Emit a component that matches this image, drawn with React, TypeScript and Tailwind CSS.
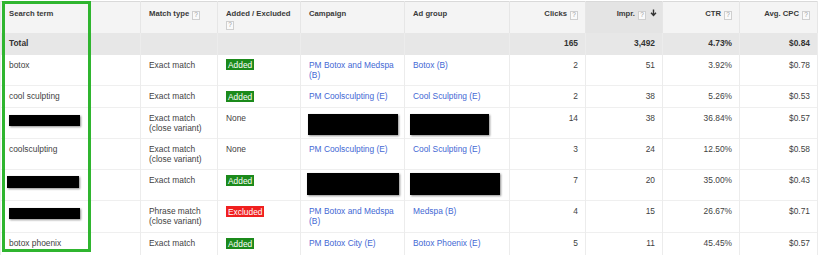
import type { ReactNode } from 'react';

type Row = {
  term: ReactNode;
  match: ReactNode;
  status: 'Added' | 'Excluded' | 'None';
  campaign: ReactNode;
  adGroup: ReactNode;
  clicks: string;
  impr: string;
  ctr: string;
  cpc: string;
  height: string;
};

const colWidths = ['w-[140px]', 'w-[77px]', 'w-[83px]', 'w-[104px]', 'w-[105px]', 'w-[76px]', 'w-[77px]', 'w-[77px]', 'w-[78px]'];

function Help() {
  return (
    <span className="ml-[3px] inline-flex h-[9px] w-[8px] items-center justify-center border border-[#cfcfcf] bg-[#fafafa] align-[-1px] text-[6.5px] font-normal leading-none text-[#9a9a9a]">
      ?
    </span>
  );
}

function Redacted({ className }: { className: string }) {
  return <div className={`bg-black shadow-[1px_1px_2px_rgba(0,0,0,0.45)] ${className}`} />;
}

function Link({ children }: { children: ReactNode }) {
  return <span className="text-[#4368d4]">{children}</span>;
}

function Status({ value }: { value: Row['status'] }) {
  if (value === 'None') return <span>None</span>;
  const color = value === 'Added' ? 'bg-[#1b8a1b]' : 'bg-[#f0201f]';
  return <span className={`${color} px-[2px] py-[0.5px] text-white`}>{value}</span>;
}

const rows: Row[] = [
  {
    term: 'botox',
    match: 'Exact match',
    status: 'Added',
    campaign: <Link>PM Botox and Medspa<br />(B)</Link>,
    adGroup: <Link>Botox (B)</Link>,
    clicks: '2', impr: '51', ctr: '3.92%', cpc: '$0.78',
    height: 'h-[31px]',
  },
  {
    term: 'cool sculpting',
    match: 'Exact match',
    status: 'Added',
    campaign: <Link>PM Coolsculpting (E)</Link>,
    adGroup: <Link>Cool Sculpting (E)</Link>,
    clicks: '2', impr: '38', ctr: '5.26%', cpc: '$0.53',
    height: 'h-[22px]',
  },
  {
    term: <Redacted className="mt-[2px] h-[11px] w-[71px]" />,
    match: <>Exact match<br />(close variant)</>,
    status: 'None',
    campaign: <Redacted className="-ml-[1px] mt-[1px] h-[21px] w-[90px]" />,
    adGroup: <Redacted className="-ml-[3px] mt-[1px] h-[21px] w-[79px]" />,
    clicks: '14', impr: '38', ctr: '36.84%', cpc: '$0.57',
    height: 'h-[31px]',
  },
  {
    term: 'coolsculpting',
    match: <>Exact match<br />(close variant)</>,
    status: 'None',
    campaign: <Link>PM Coolsculpting (E)</Link>,
    adGroup: <Link>Cool Sculpting (E)</Link>,
    clicks: '3', impr: '24', ctr: '12.50%', cpc: '$0.58',
    height: 'h-[31px]',
  },
  {
    term: <Redacted className="-ml-[2px] mt-[1px] h-[12px] w-[72px]" />,
    match: 'Exact match',
    status: 'Added',
    campaign: <Redacted className="-ml-[2px] -mt-[2px] h-[22px] w-[92px]" />,
    adGroup: <Redacted className="-ml-[3px] -mt-[2px] h-[22px] w-[90px]" />,
    clicks: '7', impr: '20', ctr: '35.00%', cpc: '$0.43',
    height: 'h-[31px]',
  },
  {
    term: <Redacted className="mt-[2px] h-[11px] w-[71px]" />,
    match: <>Phrase match<br />(close variant)</>,
    status: 'Excluded',
    campaign: <Link>PM Botox and Medspa<br />(B)</Link>,
    adGroup: <Link>Medspa (B)</Link>,
    clicks: '4', impr: '15', ctr: '26.67%', cpc: '$0.71',
    height: 'h-[32px]',
  },
  {
    term: 'botox phoenix',
    match: 'Exact match',
    status: 'Added',
    campaign: <Link>PM Botox City (E)</Link>,
    adGroup: <Link>Botox Phoenix (E)</Link>,
    clicks: '5', impr: '11', ctr: '45.45%', cpc: '$0.57',
    height: 'h-[23px]',
  },
];

const cell = 'border-x border-[#ececec] px-[8px] pt-[5px] align-top';
const num = 'border-x border-[#ececec] pl-[8px] pr-[7px] pt-[5px] text-right align-top';

export default function App() {
  return (
    <div
      className="relative h-[255px] w-[820px] overflow-hidden bg-white pt-[1px] text-[8.4px] leading-[10px] text-[#3f3f3f]"
      style={{ fontFamily: '"Liberation Sans", Arial, sans-serif' }}
    >
      <table className="w-[817px] table-fixed border-collapse border-r border-t border-[#d9d9d9]">
        <colgroup>
          {colWidths.map((w, i) => (
            <col key={i} className={w} />
          ))}
        </colgroup>
        <thead>
          <tr className="h-[31px] bg-[#f4f4f4] text-[7.7px] font-bold text-[#3a3a3a]">
            <th className="border-x border-[#e6e6e6] px-[8px] pt-[7px] text-left align-top">Search term</th>
            <th className="border-x border-[#e6e6e6] px-[8px] pt-[7px] text-left align-top">
              Match type<Help />
            </th>
            <th className="border-x border-[#e6e6e6] px-[8px] pt-[7px] text-left align-top">
              Added / Excluded
              <br />
              <span className="-ml-[3px]"><Help /></span>
            </th>
            <th className="border-x border-[#e6e6e6] px-[8px] pt-[7px] text-left align-top">Campaign</th>
            <th className="border-x border-[#e6e6e6] px-[8px] pt-[7px] text-left align-top">Ad group</th>
            <th className="border-x border-[#e6e6e6] pl-[8px] pr-[7px] pt-[7px] text-right align-top">
              Clicks<Help />
            </th>
            <th className="border-x border-[#e6e6e6] bg-[#e4e4e4] pl-[8px] pr-[5px] pt-[7px] text-right align-top">
              Impr.<Help />
              <svg viewBox="0 0 8 9" className="ml-[4px] inline-block h-[8px] w-[7px] align-[-1px]">
                <path d="M4 0.5v6M1.2 4.2L4 7.3l2.8-3.1" fill="none" stroke="#333" strokeWidth="1.6" />
              </svg>
            </th>
            <th className="border-x border-[#e6e6e6] pl-[8px] pr-[7px] pt-[7px] text-right align-top">
              CTR<Help />
            </th>
            <th className="border-x border-[#e6e6e6] pl-[8px] pr-[7px] pt-[7px] text-right align-top">
              Avg. CPC<Help />
            </th>
          </tr>
        </thead>
        <tbody>
          <tr className="h-[22px] bg-[#e7e7e7] font-bold text-[#333]">
            <td className={`${cell} border-[#e0e0e0]`}>Total</td>
            <td className={`${cell} border-[#e0e0e0]`} />
            <td className={`${cell} border-[#e0e0e0]`} />
            <td className={`${cell} border-[#e0e0e0]`} />
            <td className={`${cell} border-[#e0e0e0]`} />
            <td className={`${num} border-[#e0e0e0]`}>165</td>
            <td className={`${num} border-[#e0e0e0]`}>3,492</td>
            <td className={`${num} border-[#e0e0e0]`}>4.73%</td>
            <td className={`${num} border-[#e0e0e0]`}>$0.84</td>
          </tr>
          {rows.map((r, i) => (
            <tr key={i} className={`${r.height} border-b border-[#efefef]`}>
              <td className={cell}>{r.term}</td>
              <td className={cell}>{r.match}</td>
              <td className={cell}>
                <Status value={r.status} />
              </td>
              <td className={cell}>{r.campaign}</td>
              <td className={cell}>{r.adGroup}</td>
              <td className={num}>{r.clicks}</td>
              <td className={num}>{r.impr}</td>
              <td className={num}>{r.ctr}</td>
              <td className={num}>{r.cpc}</td>
            </tr>
          ))}
        </tbody>
      </table>
      {/* green highlight around the search term column */}
      <div className="pointer-events-none absolute left-[2px] top-[1px] h-[251px] w-[89px] border-[3px] border-[#2fb52f]" />
    </div>
  );
}
